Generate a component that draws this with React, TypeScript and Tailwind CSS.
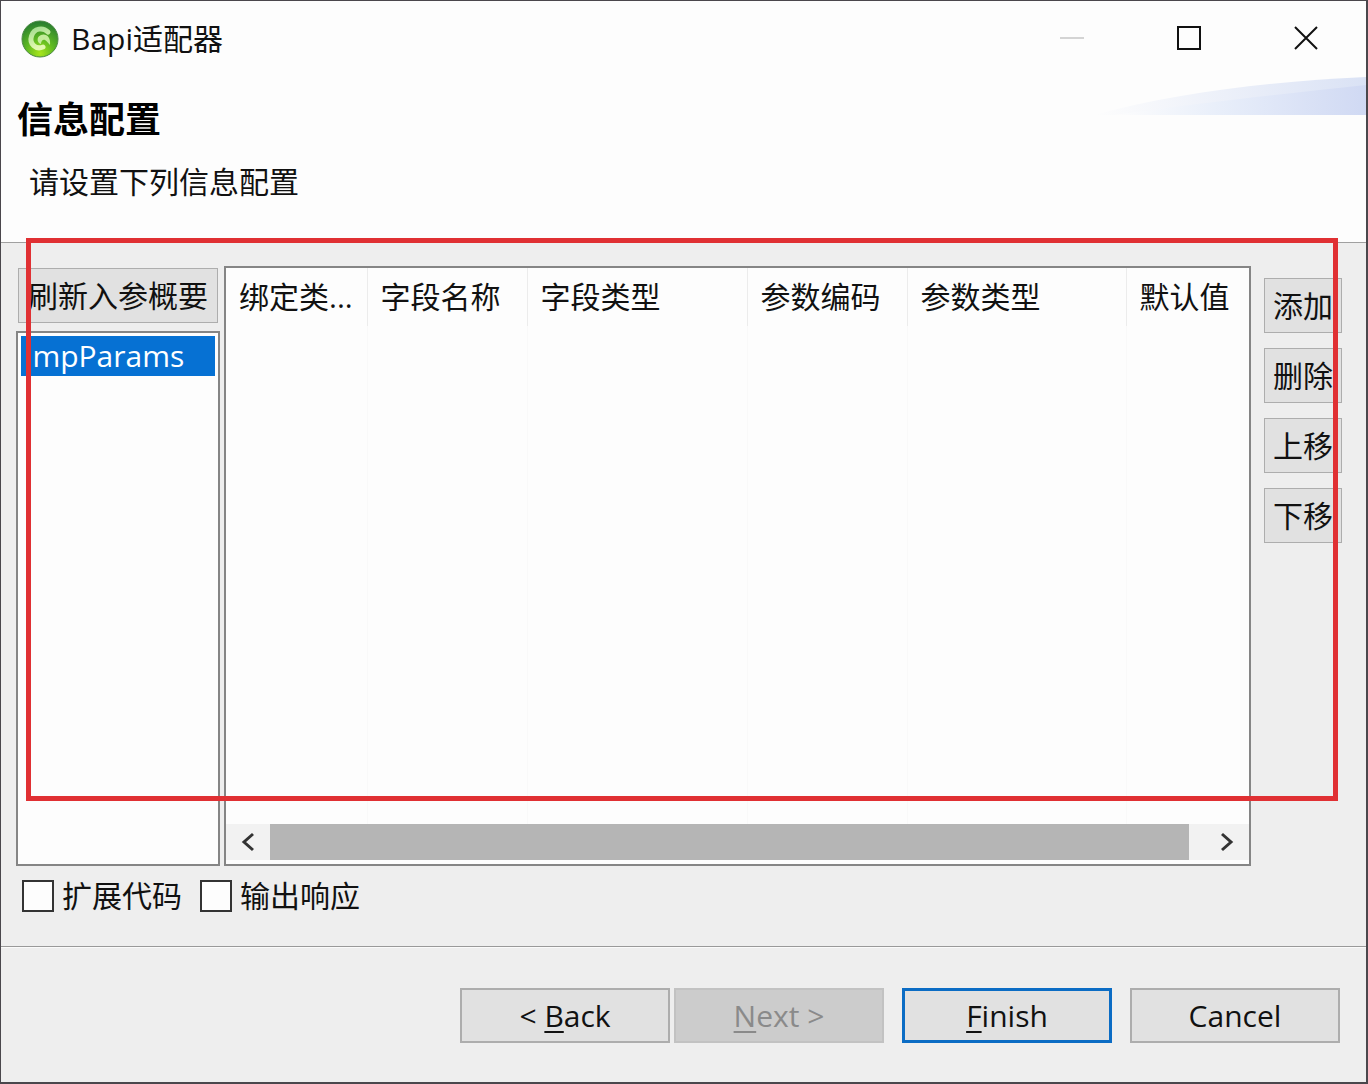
import { useState } from 'react';
import type { ReactNode } from 'react';

const columns = [
  { label: '绑定类...', width: 'w-[141px]' },
  { label: '字段名称', width: 'w-[160px]' },
  { label: '字段类型', width: 'w-[220px]' },
  { label: '参数编码', width: 'w-[160px]' },
  { label: '参数类型', width: 'w-[219px]' },
  { label: '默认值', width: '' },
];

const rowActions = ['添加', '删除', '上移', '下移'];

function AppLogo() {
  return (
    <svg width="38" height="38" viewBox="0 0 38 38" aria-hidden="true">
      <defs>
        <radialGradient id="ball" cx="0.5" cy="0.9" r="0.9">
          <stop offset="0" stopColor="#a8e61c" />
          <stop offset="0.45" stopColor="#5db822" />
          <stop offset="1" stopColor="#257a30" />
        </radialGradient>
        <linearGradient id="ring" x1="0" x2="0.3" y1="0" y2="1">
          <stop offset="0" stopColor="#a6dd92" />
          <stop offset="1" stopColor="#e2f9b0" />
        </linearGradient>
      </defs>
      <circle cx="19" cy="19" r="18" fill="url(#ball)" stroke="#4c8a44" strokeWidth="1" />
      <path
        d="M27 12 C22 7 13 8 10.500 16 C8 24 15 30 22 27"
        fill="none"
        stroke="url(#ring)"
        strokeWidth="5"
        strokeLinecap="round"
      />
      <path d="M29 25 C30 17 25 13 20 15 C15 17 16 23 20 24 C20 21 22 19 24 20 C26 21 27 23 29 25 Z" fill="#c4ec9c" />
    </svg>
  );
}

function HeaderSwoosh() {
  return (
    <svg className="mt-px shrink-0" width="272" height="38" viewBox="0 0 272 38" aria-hidden="true">
      <defs>
        <linearGradient id="swoosh" x1="0" x2="1" y1="0" y2="0">
          <stop offset="0" stopColor="#fdfdfd" />
          <stop offset="0.4" stopColor="#e9effa" />
          <stop offset="1" stopColor="#d0d9f3" />
        </linearGradient>
        <linearGradient id="swooshTop" x1="0" x2="1" y1="0" y2="0">
          <stop offset="0" stopColor="#fdfdfd" />
          <stop offset="1" stopColor="#dae2f5" />
        </linearGradient>
      </defs>
      <path d="M0 38 C80 16 180 4 272 0 V38 Z" fill="url(#swooshTop)" />
      <path d="M20 38 C120 24 200 16 272 8 V38 Z" fill="url(#swoosh)" />
    </svg>
  );
}

function WindowButton({ label, disabled, children }: { label: string; disabled?: boolean; children: ReactNode }) {
  return (
    <button
      aria-label={label}
      disabled={disabled}
      className="flex h-full w-[117px] items-center justify-center enabled:hover:bg-gray-200"
    >
      <svg width="26" height="26" viewBox="0 0 26 26" fill="none" stroke="currentColor" strokeWidth="2">
        {children}
      </svg>
    </button>
  );
}

function CheckOption({ label }: { label: string }) {
  const [checked, setChecked] = useState(false);
  return (
    <label className="flex items-center gap-2">
      <input
        type="checkbox"
        checked={checked}
        onChange={(e) => setChecked(e.target.checked)}
        className="size-8 appearance-none border-2 border-[#333] bg-[#fdfdfd] checked:bg-[#0078d7]"
      />
      {label}
    </label>
  );
}

export default function App() {
  return (
    <div className="flex min-h-screen flex-col border-t border-r-2 border-b-2 border-l border-[#4a474c] bg-[#eee] font-['Open_Sans','Noto_Sans_CJK_SC',sans-serif] text-[30px] leading-9 text-[#111]">
      {/* Title bar */}
      <div className="flex h-[75px] items-center bg-[#fdfdfd] pr-0.5 pl-5">
        <AppLogo />
        <span className="ml-3">Bapi适配器</span>
        <div className="ml-auto flex h-full">
          <WindowButton label="Minimize" disabled>
            <path d="M1 12 H25" stroke="#d4d4d4" />
          </WindowButton>
          <WindowButton label="Maximize">
            <path d="M2 1 H24 V23 H2 Z" />
          </WindowButton>
          <WindowButton label="Close">
            <path d="M2 1 L24 23 M24 1 L2 23" />
          </WindowButton>
        </div>
      </div>

      {/* Wizard header */}
      <header className="flex justify-between border-b border-[#a0a0a0] bg-[#fdfdfd] pb-[42px]">
        <div className="pt-6 pl-4">
          <h1 className="text-[36px] leading-10 font-bold text-black">信息配置</h1>
          <p className="mt-6 pl-3">请设置下列信息配置</p>
        </div>
        <HeaderSwoosh />
      </header>

      <main className="relative flex flex-1 flex-col border-b border-[#999] pt-[23px] pr-6 pb-8 pl-[15px]">
        <div className="flex flex-1">
          <div className="flex w-[204px] shrink-0 flex-col pt-0.5">
            <button className="mx-0.5 h-[55px] border border-[#adadad] bg-[#e1e1e1] whitespace-nowrap hover:bg-[#e5f1fb]">
              刷新入参概要
            </button>
            <ul className="mt-2 flex-1 border-2 border-[#858585] bg-[#fdfdfd] p-[3px]">
              <li className="h-10 bg-[#0671d3] pl-[3px] leading-10 text-white">ImpParams</li>
            </ul>
          </div>

          <div className="ml-1 flex min-w-0 flex-1 flex-col border-2 border-[#858585] bg-[#fdfdfd] pb-1">
            <table className="w-full flex-1 table-fixed border-collapse">
              <thead>
                <tr>
                  {columns.map((col) => (
                    <th
                      key={col.label}
                      className={`h-[58px] border-r border-[#ececec] pl-[13px] text-left font-normal whitespace-nowrap last:border-r-0 ${col.width}`}
                    >
                      {col.label}
                    </th>
                  ))}
                </tr>
              </thead>
              <tbody>
                <tr className="h-[494px]">
                  {columns.map((col) => (
                    <td key={col.label} className="border-r border-[#f9f9f9] last:border-r-0" />
                  ))}
                </tr>
              </tbody>
            </table>
            <div className="flex h-9 bg-[#f2f2f2]">
              <button aria-label="Scroll left" className="flex w-11 items-center justify-center">
                <svg width="16" height="20" viewBox="0 0 16 20" fill="none" stroke="#333" strokeWidth="3">
                  <path d="M13 2 L4 10 L13 18" />
                </svg>
              </button>
              <div className="flex-1 bg-[#b5b5b5]" />
              <button aria-label="Scroll right" className="ml-4 flex w-11 items-center justify-center">
                <svg width="16" height="20" viewBox="0 0 16 20" fill="none" stroke="#333" strokeWidth="3">
                  <path d="M3 2 L12 10 L3 18" />
                </svg>
              </button>
            </div>
          </div>

          <div className="mt-3 ml-[13px] flex w-[78px] shrink-0 flex-col gap-[15px]">
            {rowActions.map((action) => (
              <button
                key={action}
                className="h-[55px] border border-[#adadad] bg-[#e1e1e1] whitespace-nowrap hover:bg-[#e5f1fb]"
              >
                {action}
              </button>
            ))}
          </div>
        </div>

        <div className="mt-3 flex gap-[18px] pl-[6px]">
          <CheckOption label="扩展代码" />
          <CheckOption label="输出响应" />
        </div>

        {/* Highlight frame drawn over the parameter area */}
        <div className="pointer-events-none absolute -top-[5px] right-7 bottom-[145px] left-[25px] border-[5px] border-[#e03033]" />
      </main>

      <footer className="flex justify-end border-t border-[#fafafa] pt-10 pr-[26px] pb-[39px]">
        <button className="h-[55px] w-[210px] border-2 border-[#adadad] bg-[#e1e1e1] hover:bg-[#e5f1fb]">
          &lt; <u className="decoration-2 underline-offset-4">B</u>ack
        </button>
        <button disabled className="ml-1 h-[55px] w-[210px] border-2 border-[#c2c2c2] bg-[#ccc] text-[#8a8a8a]">
          <u className="decoration-2 underline-offset-4">N</u>ext &gt;
        </button>
        <button className="ml-[18px] h-[55px] w-[210px] border-[3px] border-[#0b6cc4] bg-[#e1e1e1] hover:bg-[#e5f1fb]">
          <u className="decoration-2 underline-offset-4">F</u>inish
        </button>
        <button className="ml-[18px] h-[55px] w-[210px] border-2 border-[#adadad] bg-[#e1e1e1] hover:bg-[#e5f1fb]">
          Cancel
        </button>
      </footer>
    </div>
  );
}
